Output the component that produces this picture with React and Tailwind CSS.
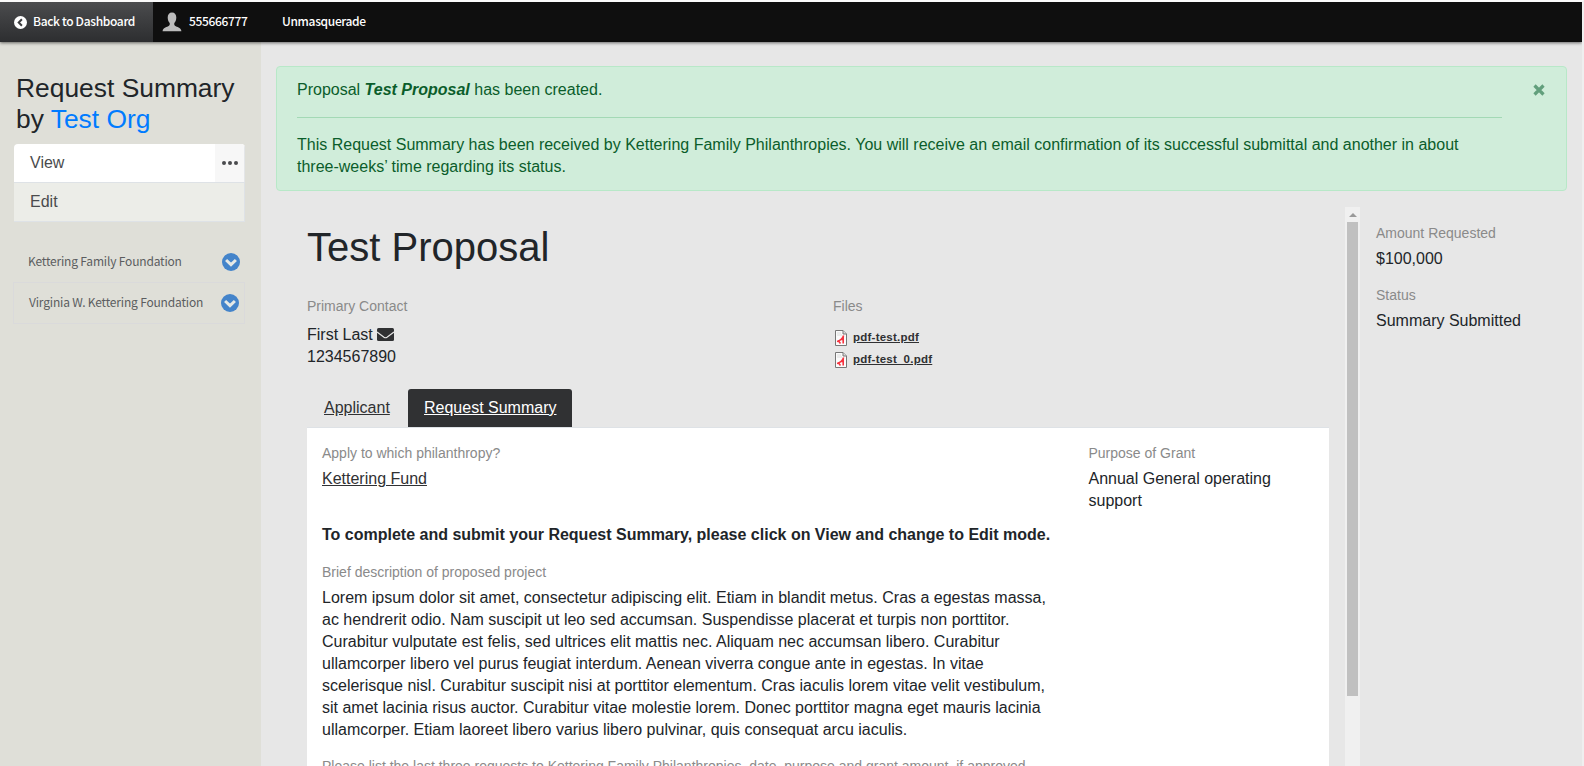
import React from "react";

const ChevronCircle = ({ className }) => (
  <svg viewBox="0 0 18 18" className={className}>
    <circle cx="9" cy="9" r="9" fill="#4484ca" />
    <path d="M4.1 7 L9 11.6 L13.9 7" fill="none" stroke="#e6e9e6" strokeWidth="3" />
  </svg>
);

const PdfIcon = () => (
  <svg viewBox="0 0 12 16" className="h-4 w-3 shrink-0">
    <path d="M.5 .5H8L11.5 4V15.5H.5Z" fill="#fbfbfb" stroke="#777" />
    <path d="M8 .5V4H11.5" fill="#ddd" stroke="#777" />
    <path d="M2 3H6M2 5H7" stroke="#ddd" />
    <path d="M2 11.5 C5 11 8 8 8.6 5.5 M8.2 6 V13.5 M3 10.5 L5.5 13.5 M6 9.5 H9" fill="none" stroke="#f5333f" strokeWidth="1.6" />
  </svg>
);

const Field = ({ label, children, className = "" }) => (
  <div className={className}>
    <div className="h-[26px] text-sm leading-[22px] text-[#8a8a8a]">{label}</div>
    <div>{children}</div>
  </div>
);

const FileLink = ({ name }) => (
  <div className="flex h-[22px] items-center">
    <PdfIcon />
    <a className="mb-[3px] ml-1.5 text-[11.5px] font-bold tracking-[0.23px] text-[#303133] underline">{name}</a>
  </div>
);

function TopBar() {
  return (
    <header className="relative z-10 flex h-10 bg-[#0f0f0f] font-['Noto_Sans_CJK_SC',sans-serif] text-[12px] leading-9 font-medium tracking-[-0.34px] text-white shadow-[0_1px_3px_rgba(0,0,0,0.55)]">
      <a className="flex w-[153px] items-center bg-linear-to-b from-[#4b4c4e] to-[#2d2e30] pl-3.5">
        <svg viewBox="0 0 13 13" className="mr-[6px] h-[13px] w-[13px]">
          <circle cx="6.5" cy="6.5" r="6.5" fill="#fff" />
          <path d="M7.9 3.2 L4.7 6.5 L7.9 9.8" fill="none" stroke="#3c3d3f" strokeWidth="2" />
        </svg>
        <span className="pb-[3px] whitespace-nowrap">Back to Dashboard</span>
      </a>
      <a className="flex w-[112px] items-center pl-[9px]">
        <svg viewBox="0 0 20 20" className="mr-[7px] h-5 w-5">
          <path d="M10 .5C7.2.5 5.7 2.6 5.7 5.4c0 2.3.8 4.4 2 5.7.3 1.7-.2 2.6-1.5 3.2C3.6 15.4 1 16 .6 19.2H19.4C19 16 16.400 15.400 13.800 14.300 12.500 13.700 12 12.800 12.300 11.100 13.500 9.800 14.300 7.700 14.300 5.400 14.300 2.600 12.800.5 10 .5Z" fill="#bcbcbc" />
        </svg>
        <span className="pb-[3px]">555666777</span>
      </a>
      <a className="flex items-center pb-[3px] pl-[17px]">Unmasquerade</a>
    </header>
  );
}

function Sidebar() {
  return (
    <aside className="flex w-[261px] shrink-0 flex-col bg-[#dfdfd8]">
      <h2 className="mt-[31px] pl-4 text-[26.4px] leading-[31px] whitespace-nowrap text-[#212529]">
        Request Summary
        <br />
        by <span className="text-[#007bff]">Test Org</span>
      </h2>
      <nav className="mt-[9px] ml-3.5 w-[231px] rounded-t text-[#4a4b4d]">
        <div className="flex h-[39px] overflow-hidden rounded-t border-b border-[#dee2e6] bg-white">
          <span className="flex-1 pl-4 leading-[38px]">View</span>
          <span className="flex w-[30px] items-center justify-center border-r border-[#e4e6e8] bg-[#f7f7f7]">
            <svg viewBox="0 0 16 4" className="h-1 w-4">
              <circle cx="2" cy="2" r="2" fill="#4a4b4d" />
              <circle cx="8" cy="2" r="2" fill="#4a4b4d" />
              <circle cx="14" cy="2" r="2" fill="#4a4b4d" />
            </svg>
          </span>
        </div>
        <div className="h-[39px] border-r border-b border-[#dee2e6] bg-[#ecede8] pl-4 leading-[37px]">Edit</div>
      </nav>
      <div className="mt-[19px] ml-[13px] w-[232px] font-['Noto_Sans_CJK_SC',sans-serif] text-[12px] tracking-[-0.18px] whitespace-nowrap text-[#5b5d5f]">
        <div className="flex h-[41px] items-center justify-between pr-[5px] pl-[15px]">
          <span className="pb-0.5">Kettering Family Foundation</span>
          <ChevronCircle className="h-[18px] w-[18px]" />
        </div>
        <div className="flex h-[42px] items-center justify-between border border-[#dadadb] pr-[5px] pl-[15px]">
          <span className="pb-0.5">Virginia W. Kettering Foundation</span>
          <ChevronCircle className="h-[18px] w-[18px]" />
        </div>
      </div>
    </aside>
  );
}

function Alert() {
  return (
    <div className="mr-[15px] ml-[15px] mt-6 flex h-[125px] justify-between rounded border border-[#b8e8c8] bg-[#d0edda] py-3 pr-[27px] pl-5 text-[#0b5d2b]">
      <div className="w-[1205px]">
        <p>
          Proposal <em className="font-bold">Test Proposal</em> has been created.
        </p>
        <hr className="my-4 border-t border-[#a3d9b5]" />
        <p>
          This Request Summary has been received by Kettering Family Philanthropies. You will receive an email
          confirmation of its successful submittal and another in about three-weeks’ time regarding its status.
        </p>
      </div>
      <svg viewBox="0 0 12 12" className="mt-[5px] -mr-1.5 h-3 w-3">
        <path d="M1.500 1.500L10.500 10.500M10.500 1.500L1.500 10.500" stroke="#629f7c" strokeWidth="3.200" />
      </svg>
    </div>
  );
}

function Proposal() {
  return (
    <section className="flex w-[1084px] shrink-0 flex-col overflow-hidden pr-[16px] pl-[46px]">
      <h1 className="mt-[16px] text-[40px] leading-[48px]">Test Proposal</h1>
      <div className="mt-[24px] flex">
        <div className="w-[526px]">
          <div className="h-[29px] text-sm leading-[22px] text-[#8a8a8a]">Primary Contact</div>
          <div className="flex items-center">
            First Last
            <svg viewBox="0 0 17 13" className="mb-0.5 ml-1 h-[13px] w-[17px]">
              <rect width="17" height="13" rx="1.500" fill="#303133" />
              <path d="M0 4 L7 9.300 Q8.500 10.200 10 9.300 L17 4" fill="none" stroke="#e7e7e7" strokeWidth="1.200" />
            </svg>
          </div>
          <div>1234567890</div>
        </div>
        <div>
          <div className="h-[32px] text-sm leading-[22px] text-[#8a8a8a]">Files</div>
          <div className="pl-0.5">
            <FileLink name="pdf-test.pdf" />
            <FileLink name="pdf-test_0.pdf" />
          </div>
        </div>
      </div>
      <div className="mt-[18px] flex h-[39px] shrink-0 border-b border-[#dee2e6] text-[#303133] underline">
        <span className="w-[101px] pl-[17px] leading-[38px]">Applicant</span>
        <span className="w-[164px] rounded-t-[3px] bg-[#303133] pl-4 leading-[38px] text-white underline">Request Summary</span>
      </div>
      <div className="flex h-[400px] shrink-0 bg-white px-[15px] pt-[14px]">
        <div className="w-[766.5px] shrink-0 pr-[30px]">
          <Field label="Apply to which philanthropy?">
            <a className="text-[#303133] underline">Kettering Fund</a>
          </Field>
          <p className="mt-[34px] font-bold">
            To complete and submit your Request Summary, please click on View and change to Edit mode.
          </p>
          <Field className="mt-[15px]" label="Brief description of proposed project">
            Lorem ipsum dolor sit amet, consectetur adipiscing elit. Etiam in blandit metus. Cras a egestas massa, ac
            hendrerit odio. Nam suscipit ut leo sed accumsan. Suspendisse placerat et turpis non porttitor. Curabitur
            vulputate est felis, sed ultrices elit mattis nec. Aliquam nec accumsan libero. Curabitur ullamcorper libero
            vel purus feugiat interdum. Aenean viverra congue ante in egestas. In vitae scelerisque nisl. Curabitur
            suscipit nisi at porttitor elementum. Cras iaculis lorem vitae velit vestibulum, sit amet lacinia risus
            auctor. Curabitur vitae molestie lorem. Donec porttitor magna eget mauris lacinia ullamcorper. Etiam laoreet
            libero varius libero pulvinar, quis consequat arcu iaculis.
          </Field>
          <Field
            className="mt-[14px]"
            label="Please list the last three requests to Kettering Family Philanthropies, date, purpose and grant amount, if approved"
          />
        </div>
        <Field label="Purpose of Grant">Annual General operating support</Field>
      </div>
    </section>
  );
}

function ScrollBar() {
  return (
    <div className="flex w-[15px] shrink-0 flex-col items-center bg-[#f0f0f0]">
      <div className="flex h-[15px] shrink-0 items-center">
        <svg viewBox="0 0 8 4" className="h-1 w-2">
          <path d="M0 4L4 0L8 4Z" fill="#999" />
        </svg>
      </div>
      <div className="h-[474px] w-[11px] bg-[#c0c0c0]" />
    </div>
  );
}

export default function App() {
  return (
    <div className="flex h-[766px] w-[1584px] flex-col overflow-hidden border-t-2 border-r-2 border-t-[#fafafa] border-r-[#efefef] bg-[#e7e7e7] font-['Liberation_Sans',Arial,sans-serif] text-base leading-[22px] text-[#212529]">
      <TopBar />
      <div className="flex min-h-0 flex-1">
        <Sidebar />
        <main className="flex min-w-0 flex-1 flex-col">
          <Alert />
          <div className="mt-4 flex min-h-0 flex-1">
            <Proposal />
            <ScrollBar />
            <div className="flex flex-col gap-3.5 pt-[15px] pl-4">
              <Field label="Amount Requested">$100,000</Field>
              <Field label="Status">Summary Submitted</Field>
            </div>
          </div>
        </main>
      </div>
    </div>
  );
}
